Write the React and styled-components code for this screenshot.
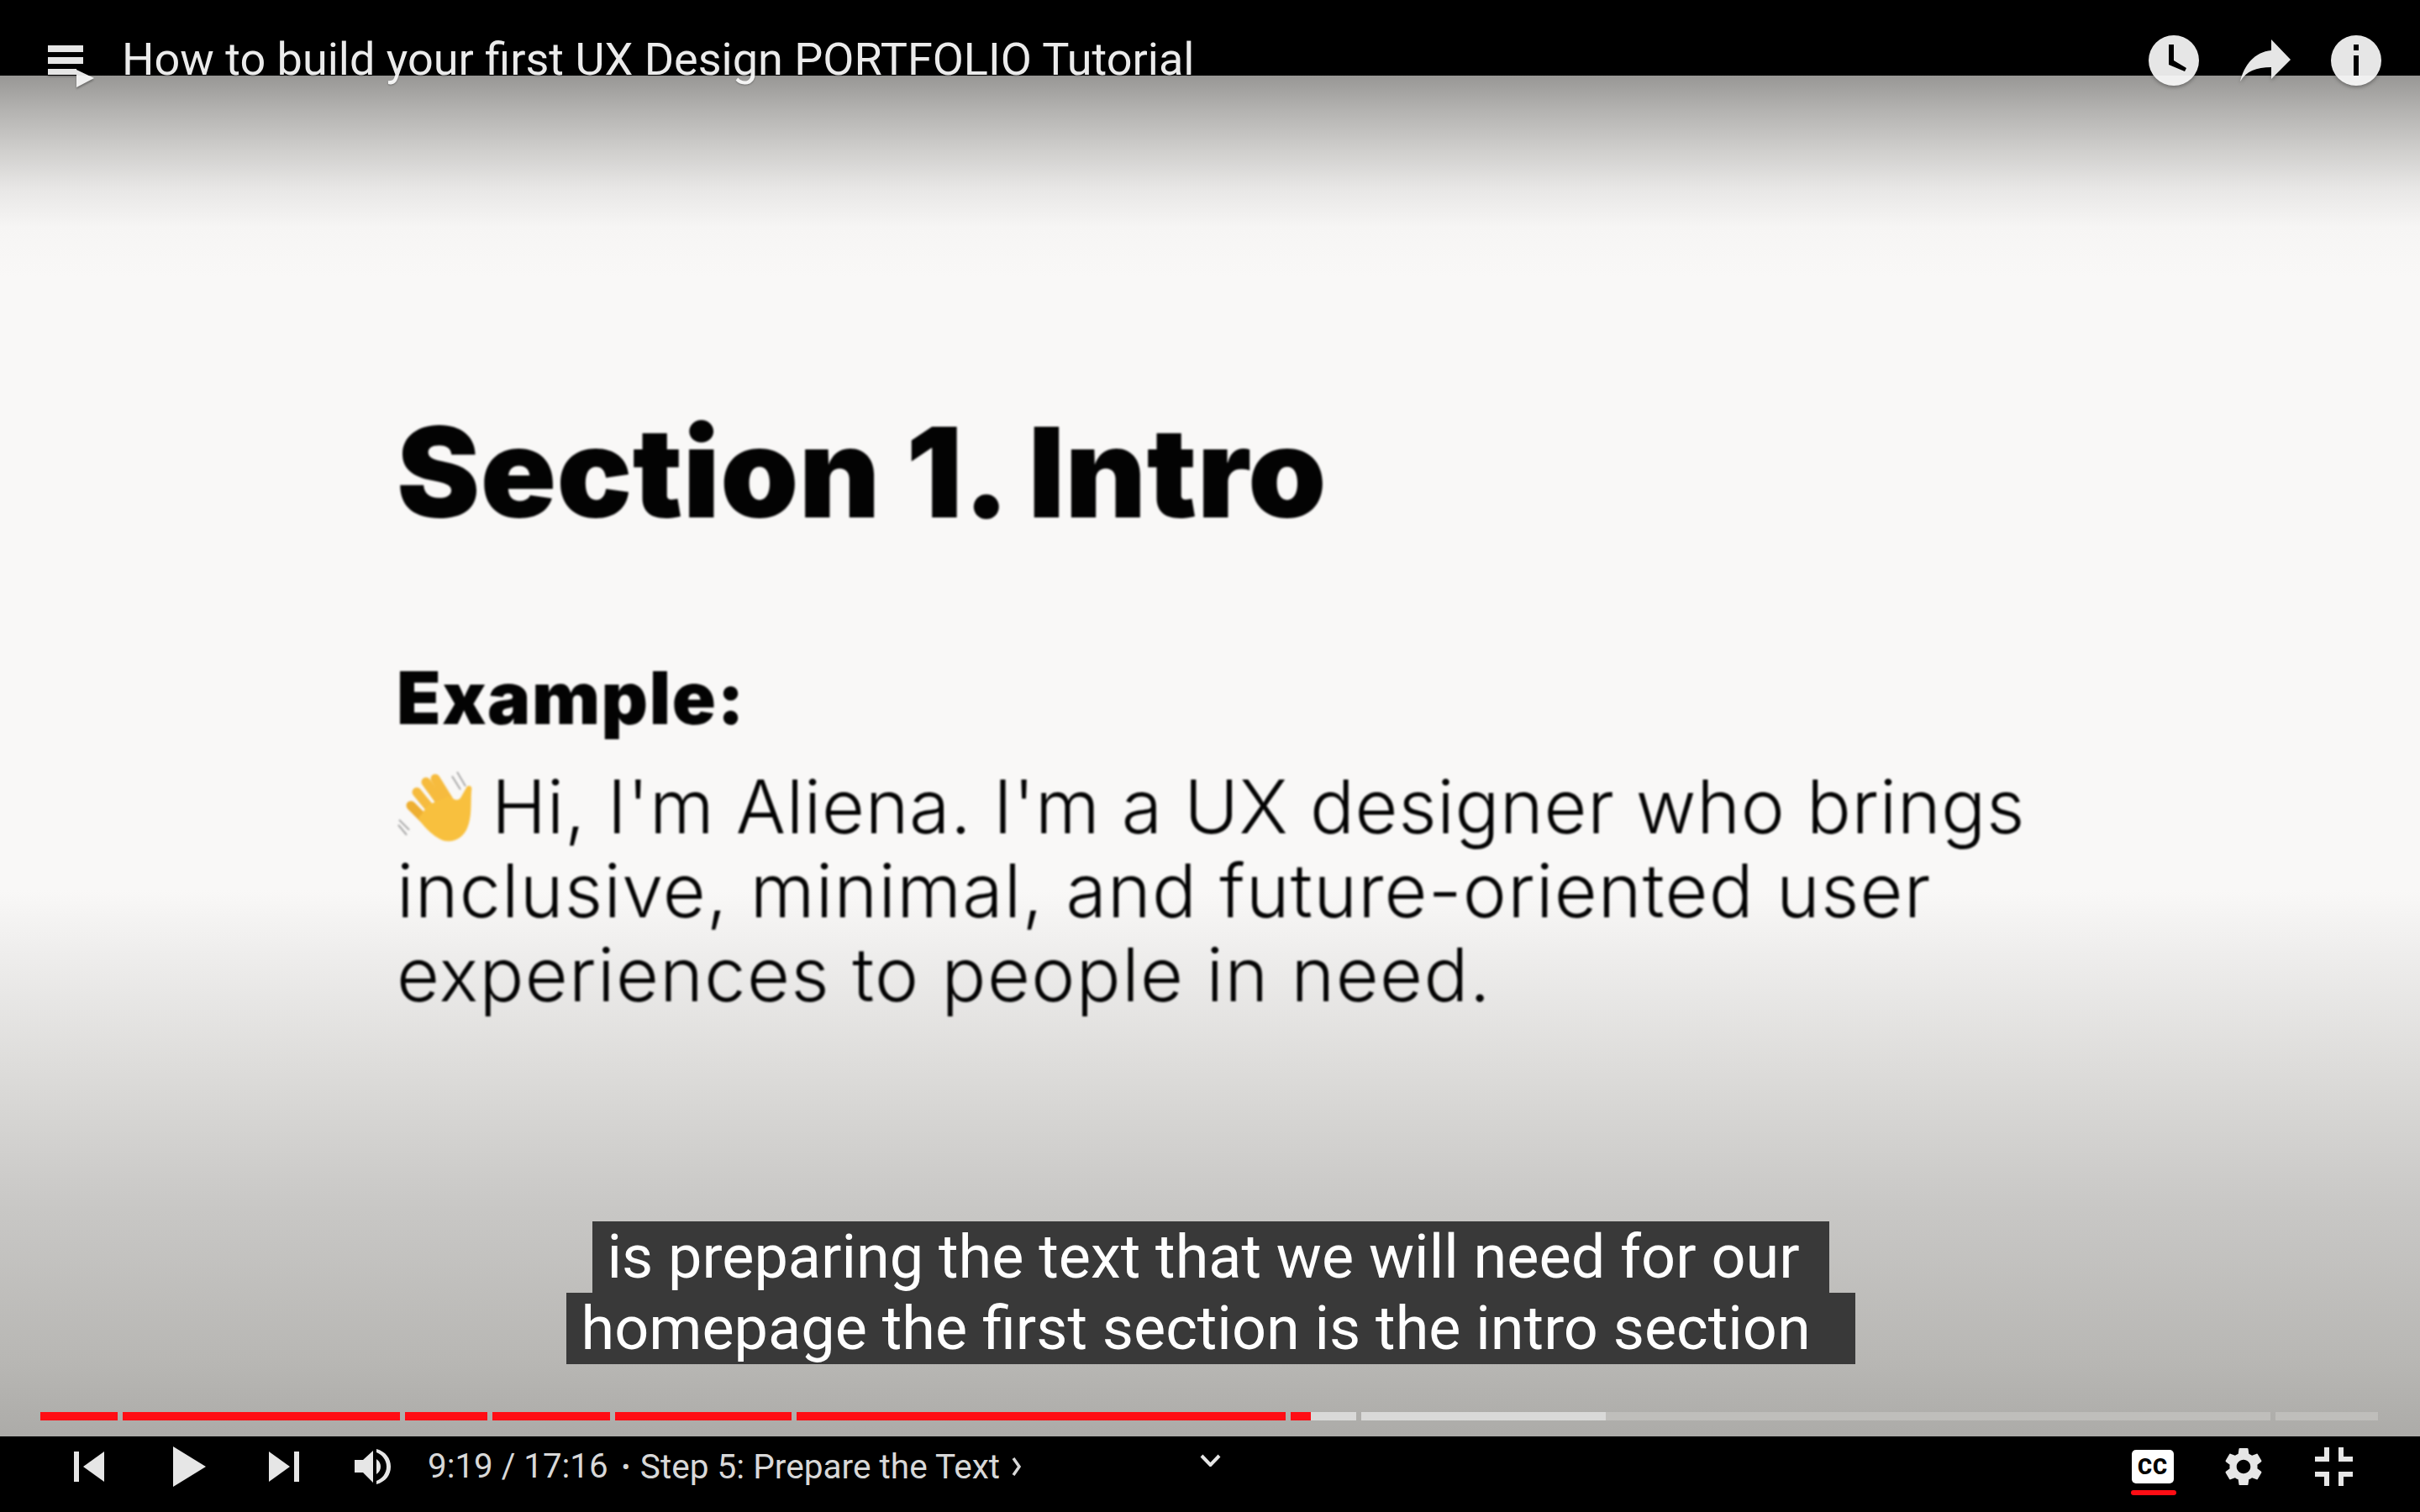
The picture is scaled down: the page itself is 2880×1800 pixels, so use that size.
import React from "react";
import styled, { createGlobalStyle } from "styled-components";

const GlobalStyle = createGlobalStyle`
  html, body {
    margin: 0;
    padding: 0;
    background: #000;
    font-family: Roboto, "Liberation Sans", sans-serif;
  }
`;

const Page = styled.div`
  width: 2880px;
  height: 1800px;
  display: flex;
  flex-direction: column;
  overflow: hidden;
`;

const Header = styled.header`
  height: 90px;
  flex: none;
  box-sizing: border-box;
  display: flex;
  align-items: flex-start;
  padding: 42px 46px 0 57px;
  background: #000;
  position: relative;
  z-index: 2;
`;

const PlaylistIcon = styled.svg`
  width: 55px;
  height: 51px;
  margin-top: 12px;
  fill: rgba(255, 255, 255, 0.9);
  filter: drop-shadow(0 2px 1px rgba(0, 0, 0, 0.35));
`;

const Title = styled.h1`
  margin: -3px 0 0 33px;
  font-size: 54px;
  font-weight: 400;
  line-height: 64px;
  white-space: nowrap;
  color: rgba(255, 255, 255, 0.92);
  text-shadow: 0 1px 2px rgba(0, 0, 0, 0.3);
`;

const HeaderActions = styled.div`
  margin-left: auto;
  display: flex;
  align-items: flex-start;
  gap: 48px;
`;

const RoundIcon = styled.svg`
  width: 60px;
  height: 60px;
  fill: rgba(255, 255, 255, 0.9);
  filter: drop-shadow(0 2px 2px rgba(0, 0, 0, 0.35));
`;

const ShareIcon = styled.svg`
  width: 61px;
  height: 51px;
  margin-top: 5px;
  fill: rgba(255, 255, 255, 0.9);
  filter: drop-shadow(0 2px 2px rgba(0, 0, 0, 0.35));
`;

const Stage = styled.main`
  flex: 1;
  display: flex;
  flex-direction: column;
  background: linear-gradient(
    180deg,
    #989795 0,
    #b4b3b1 42px,
    #d0cfcd 90px,
    #e8e7e6 135px,
    #f6f5f4 180px,
    #f9f8f7 240px,
    #f9f8f7 970px,
    #efeeed 1040px,
    #dcdbd9 1190px,
    #c8c7c5 1350px,
    #b8b7b4 1530px,
    #acaba8 1620px
  );
`;

const Slide = styled.section`
  padding: 382px 0 0 472px;
  color: #030303;
  font-family: Inter, Roboto, sans-serif;
  filter: blur(1px);
`;

const SlideTitle = styled.h2`
  margin: 0;
  font-size: 149px;
  font-weight: 900;
  line-height: 180px;
  letter-spacing: 0.45px;
  white-space: nowrap;
`;

const SlideLabel = styled.h3`
  margin: 129px 0 0;
  font-size: 86px;
  font-weight: 900;
  line-height: 100px;
  letter-spacing: 1.6px;
`;

const SlideLine = styled.div`
  font-size: 88px;
  font-weight: 350;
  line-height: 100px;
  letter-spacing: ${(p) => p.$spacing}px;
  white-space: nowrap;
  display: flex;
  align-items: center;
`;

const Body = styled.div`
  margin-top: 29px;
`;

const HandIcon = styled.svg`
  width: 90px;
  height: 88px;
  margin-right: 23px;
  flex: none;
`;

const Captions = styled.div`
  margin-top: auto;
  padding-left: 2px;
  display: flex;
  flex-direction: column;
  align-items: center;
`;

const CaptionLine = styled.div`
  height: 85px;
  box-sizing: border-box;
  padding: 0 18px;
  background: #393939;
  color: #fff;
  font-size: 72px;
  line-height: 85px;
  white-space: pre;
`;

const Progress = styled.div`
  margin: 57px 0 19px 48px;
  height: 10px;
  display: flex;
  gap: 6px;
`;

const Segment = styled.div`
  width: ${(p) => p.$width}px;
  height: 10px;
  background: linear-gradient(
    90deg,
    #ff0d14 ${(p) => p.$played}px,
    #d9d9d8 ${(p) => p.$played}px,
    #d9d9d8 ${(p) => p.$buffered}px,
    #bfbebb ${(p) => p.$buffered}px
  );
`;

const Controls = styled.footer`
  height: 90px;
  flex: none;
  box-sizing: border-box;
  display: flex;
  align-items: center;
  padding: 0 80px 18px 88px;
  background: #000;
  position: relative;
`;

const ControlIcon = styled.svg`
  flex: none;
  margin-left: ${(p) => p.$gap || 0}px;
  fill: #e6e6e6;
`;

const TimeText = styled.span`
  margin-left: 44px;
  font-size: 40.3px;
  font-weight: 400;
  color: #d8d8d8;
  white-space: nowrap;
  line-height: 48px;
`;

const ChapterDot = styled.span`
  margin: 0 12px 0 16px;
  font-size: 30px;
  color: #d8d8d8;
`;

const ChapterText = styled.span`
  font-size: 40.6px;
  font-weight: 400;
  color: #d8d8d8;
  white-space: nowrap;
  line-height: 48px;
`;

const ChapterChevron = styled.svg`
  margin-left: 14px;
  width: 12px;
  height: 24px;
  fill: none;
  stroke: #d8d8d8;
  stroke-width: 3.5;
`;

const MoreChevron = styled.svg`
  position: absolute;
  left: 1428px;
  top: 21px;
  width: 25px;
  height: 15px;
  fill: none;
  stroke: #e6e6e6;
  stroke-width: 4;
`;

const RightControls = styled.div`
  margin-left: auto;
  display: flex;
  align-items: center;
`;

const CcButton = styled.div`
  position: relative;
  width: 50px;
  height: 40px;
  border-radius: 5px;
  background: #fff;
  display: flex;
  align-items: center;
  justify-content: center;
  color: #000;
  font-size: 26px;
  font-weight: 900;
  letter-spacing: 1px;
`;

const CcUnderline = styled.div`
  position: absolute;
  left: -1px;
  top: 48px;
  width: 54px;
  height: 6px;
  border-radius: 3px;
  background: #ff0d14;
`;

const segments = [
  [48, 140],
  [146, 476],
  [482, 580],
  [586, 726],
  [732, 942],
  [948, 1530],
  [1536, 1614],
  [1620, 2702],
  [2708, 2830],
];
const PLAYED_TO = 1560;
const BUFFERED_TO = 1911;

const Hand = () => (
  <HandIcon viewBox="0 0 90 88">
    <g fill="none" stroke="#f6bb3e" strokeWidth="11" strokeLinecap="round">
      <path d="M24 27 L46 54" />
      <path d="M35 15 L56 44" />
      <path d="M46 11 L64 40" />
      <path d="M17 43 L40 66" stroke="#eeaf32" />
    </g>
    <path
      d="M38 42 L62 32 C68 36 72 38 76 34 L84 20 C89 18 90 22 89 26 C88 40 90 56 84 70 C78 84 62 90 50 82 C40 76 32 68 26 58 Z"
      fill="#f8c03e"
    />
    <g fill="none" stroke="#a9a9a9" strokeWidth="2">
      <path d="M66 8 L76 24" />
      <path d="M72 3 L82 20" />
      <path d="M3 60 L15 72" />
      <path d="M2 66 L12 78" />
    </g>
  </HandIcon>
);

const App = () => {
  return (
    <Page>
      <GlobalStyle />
      <Header>
        <PlaylistIcon viewBox="0 0 55 51">
          <rect x="0" y="0" width="42" height="8" />
          <rect x="0" y="14" width="42" height="8" />
          <rect x="0" y="28" width="34" height="7" />
          <polygon points="34,29 55,39 34,50" />
        </PlaylistIcon>
        <Title>How to build your first UX Design PORTFOLIO Tutorial</Title>
        <HeaderActions>
          <RoundIcon viewBox="0 0 60 60">
            <path
              fillRule="evenodd"
              d="M30 0a30 30 0 1 0 0 60a30 30 0 1 0 0-60zM24 11h6v19l15 9-2 4-19-8z"
            />
          </RoundIcon>
          <ShareIcon viewBox="0 0 61 51">
            <path d="M38 0 L61 24 L38 47 V33 C20 33 8 38 1 50 C6 30 18 15 38 13 Z" />
          </ShareIcon>
          <RoundIcon viewBox="0 0 60 60">
            <path
              fillRule="evenodd"
              d="M30 0a30 30 0 1 0 0 60a30 30 0 1 0 0-60zM27 11h6v7h-6zM27 24h6v24h-6z"
            />
          </RoundIcon>
        </HeaderActions>
      </Header>

      <Stage>
        <Slide>
          <SlideTitle>Section 1. Intro</SlideTitle>
          <SlideLabel>Example:</SlideLabel>
          <Body>
            <SlideLine $spacing={0.65}>
              <Hand />
              Hi, I'm Aliena. I'm a UX designer who brings
            </SlideLine>
            <SlideLine $spacing={1.2}>inclusive, minimal, and future-oriented user</SlideLine>
            <SlideLine $spacing={1.35}>experiences to people in need.</SlideLine>
          </Body>
        </Slide>

        <Captions>
          <CaptionLine>is preparing the text that we will need for our </CaptionLine>
          <CaptionLine>homepage the first section is the intro section  </CaptionLine>
        </Captions>

        <Progress>
          {segments.map(([start, end]) => (
            <Segment
              key={start}
              $width={end - start}
              $played={PLAYED_TO - start}
              $buffered={BUFFERED_TO - start}
            />
          ))}
        </Progress>
      </Stage>

      <Controls>
        <ControlIcon viewBox="0 0 36 36" width="36" height="36">
          <rect x="0" y="0" width="6" height="36" />
          <polygon points="36,0 11,18 36,36" />
        </ControlIcon>
        <ControlIcon $gap={82} viewBox="0 0 39 48" width="39" height="48">
          <polygon points="0,0 39,24 0,48" />
        </ControlIcon>
        <ControlIcon $gap={75} viewBox="0 0 36 36" width="36" height="36">
          <polygon points="0,0 25,18 0,36" />
          <rect x="30" y="0" width="6" height="36" />
        </ControlIcon>
        <ControlIcon $gap={66} viewBox="0 0 43 42" width="43" height="42">
          <path d="M0 13H10L22 2V40L10 28H0Z" />
          <path d="M26 12C30 15 31 18 31 21C31 24 30 27 26 30Z" />
          <path d="M26 0C37 3 43 11 43 21C43 31 37 39 26 42V38C33 35 38 29 38 21C38 13 33 7 26 4Z" />
        </ControlIcon>
        <TimeText>9:19 / 17:16</TimeText>
        <ChapterDot>•</ChapterDot>
        <ChapterText>Step 5: Prepare the Text</ChapterText>
        <ChapterChevron viewBox="0 0 12 24">
          <path d="M2 2 L9 12 L2 22" />
        </ChapterChevron>
        <MoreChevron viewBox="0 0 25 15">
          <path d="M2 2 L12.5 13 L23 2" />
        </MoreChevron>
        <RightControls>
          <CcButton>
            CC
            <CcUnderline />
          </CcButton>
          <ControlIcon $gap={61} viewBox="2.6 2 18.8 20" width="44" height="46">
            <path d="M19.14 12.94c.04-.3.06-.61.06-.94 0-.32-.02-.64-.07-.94l2.03-1.58c.18-.14.23-.41.12-.61l-1.92-3.32c-.12-.22-.37-.29-.59-.22l-2.39.96c-.5-.38-1.03-.7-1.62-.94l-.36-2.54c-.04-.24-.24-.41-.48-.41h-3.84c-.24 0-.43.17-.47.41l-.36 2.54c-.59.24-1.13.57-1.62.94l-2.39-.96c-.22-.08-.47 0-.59.22L2.74 8.87c-.12.21-.08.47.12.61l2.03 1.58c-.05.3-.09.63-.09.94s.02.64.07.94l-2.03 1.58c-.18.14-.23.41-.12.61l1.92 3.32c.12.22.37.29.59.22l2.39-.96c.5.38 1.03.7 1.62.94l.36 2.54c.05.24.24.41.48.41h3.84c.24 0 .44-.17.47-.41l.36-2.54c.59-.24 1.13-.56 1.62-.94l2.39.96c.22.08.47 0 .59-.22l1.92-3.32c.12-.22.07-.47-.12-.61l-2.01-1.58zM12 15.6c-1.98 0-3.6-1.62-3.6-3.6s1.62-3.6 3.6-3.6 3.6 1.62 3.6 3.6-1.62 3.6-3.6 3.6z" />
          </ControlIcon>
          <ControlIcon $gap={63} viewBox="0 0 45 46" width="45" height="46">
            <path d="M11 0H17V17H0V11H11Z" />
            <path d="M28 0H34V11H45V17H28Z" />
            <path d="M0 29H17V46H11V35H0Z" />
            <path d="M28 29H45V35H34V46H28Z" />
          </ControlIcon>
        </RightControls>
      </Controls>
    </Page>
  );
};

export default App;
